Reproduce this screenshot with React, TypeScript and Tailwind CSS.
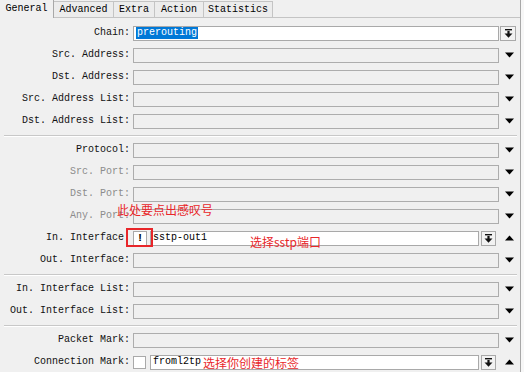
import React from "react";

type RowProps = {
  label: string;
  dim?: boolean;
  white?: boolean;
  value?: React.ReactNode;
  right?: "down" | "button" | "buttonUp";
  prefix?: "bang" | "check";
};

const MONO = "font-['Liberation_Mono','DejaVu_Sans_Mono',monospace]";

function DropBtn({ w }: { w: string }) {
  return (
    <div className={`${w} h-[15px] border border-[#a9a9a9] bg-[#f2f2f2] flex items-center justify-center`}>
      <svg width="9" height="9" viewBox="0 0 9 9">
        <rect x="1" y="0" width="7" height="1.4" fill="#111" />
        <rect x="3.4" y="2" width="2.2" height="3" fill="#111" />
        <path d="M0.5 4.6 H8.5 L4.5 8.8 Z" fill="#111" />
      </svg>
    </div>
  );
}

function Tri({ up }: { up?: boolean }) {
  return (
    <svg width="9" height="6" viewBox="0 0 9 6">
      <path d={up ? "M0 5.5 H9 L4.5 0.5 Z" : "M0 0.5 H9 L4.5 5.5 Z"} fill="#000" />
    </svg>
  );
}

function Row({ label, dim, white, value, right = "down", prefix }: RowProps) {
  return (
    <div className="flex items-center h-[22px]">
      <div className={`w-[131px] text-right pr-[1px] whitespace-pre ${dim ? "text-[#8c8c8c]" : "text-[#111]"}`}>
        {label}
      </div>
      <div className="flex items-center flex-1 ml-[2px]">
        {prefix === "bang" && (
          <div className="w-[14px] h-[15px] mr-[3px] border border-[#a9a9a9] bg-white flex items-center justify-center font-bold text-[11px] leading-none">
            !
          </div>
        )}
        {prefix === "check" && (
          <div className="w-[13px] h-[13px] mr-[4px] border border-[#a9a9a9] bg-white" />
        )}
        <div
          className={`flex-1 h-[15px] border flex items-center pl-[2px] ${
            white ? "bg-white border-[#a9a9a9]" : "bg-[#f0f0f0] border-[#adadad]"
          }`}
        >
          {value}
        </div>
        {right === "buttonUp" && (
          <div className="ml-[2px] mr-[3px]">
            <DropBtn w="w-[15px]" />
          </div>
        )}
      </div>
      <div className="w-[21px] flex items-center justify-center">
        {right === "button" ? (
          <div className="ml-[1px] mr-[4px]">
            <DropBtn w="w-[16px]" />
          </div>
        ) : (
          <Tri up={right === "buttonUp"} />
        )}
      </div>
    </div>
  );
}

function Sep() {
  return (
    <div className="h-[7px] flex items-center pl-[4px] pr-[3px]">
      <div className="w-full border-t border-[#c8c8c8] border-b border-b-white" />
    </div>
  );
}

const TABS = [
  { name: "General", w: "w-[54px]" },
  { name: "Advanced", w: "w-[60px]" },
  { name: "Extra", w: "w-[41px]" },
  { name: "Action", w: "w-[49px]" },
  { name: "Statistics", w: "w-[69px]" },
];

export default function App() {
  return (
    <div className={`relative w-[524px] h-[372px] overflow-hidden bg-[#f7f7f7] text-[10px] leading-none ${MONO}`}>
      <div className="w-[521px] h-full bg-[#f0f0f0] border-r border-[#a8a8a8]">
        {/* tabs */}
        <div className="flex items-end h-[18px] border-b border-[#c4c4c4]">
          {TABS.map((t, i) =>
            i === 0 ? (
              <div
                key={t.name}
                className={`${t.w} h-[19px] -mb-px bg-[#f0f0f0] border-r border-[#a8a8a8] flex items-center justify-center text-black`}
              >
                {t.name}
              </div>
            ) : (
              <div
                key={t.name}
                className={`${t.w} h-[16px] bg-[#ececec] border-t border-r border-[#c4c4c4] flex items-center justify-center text-black pt-[1px]`}
              >
                {t.name}
              </div>
            )
          )}
        </div>

        <div className="pt-[4px]">
          <Row
            label="Chain:"
            white
            right="button"
            value={<span className="bg-[#0078d7] text-white px-[1px] py-[1px]">prerouting</span>}
          />
          <Row label="Src. Address:" />
          <Row label="Dst. Address:" />
          <Row label="Src. Address List:" />
          <Row label="Dst. Address List:" />
          <Sep />
          <Row label="Protocol:" />
          <Row label="Src. Port:" dim />
          <Row label="Dst. Port:" dim />
          <Row label="Any. Port:" dim />
          <Row
            label="In. Interface:"
            white
            prefix="bang"
            right="buttonUp"
            value={<span className="text-black">sstp-out1</span>}
          />
          <Row label="Out. Interface:" />
          <Sep />
          <Row label="In. Interface List:" />
          <Row label="Out. Interface List:" />
          <Sep />
          <Row label="Packet Mark:" />
          <Row
            label="Connection Mark:"
            white
            prefix="check"
            right="buttonUp"
            value={<span className="text-black">froml2tp</span>}
          />
        </div>
      </div>

      {/* annotations */}
      <div className="absolute left-[126px] top-[228px] w-[27px] h-[19px] border-2 border-[#e8262a]" />
      <div className="absolute left-[117px] top-[202px] text-[12px] leading-[15px] text-[#e8262a] font-['Noto_Sans_CJK_SC',sans-serif]">
        此处要点出感叹号
      </div>
      <div className="absolute left-[250px] top-[234px] text-[12px] leading-[15px] text-[#e8262a] font-['Noto_Sans_CJK_SC',sans-serif]">
        选择sstp端口
      </div>
      <div className="absolute left-[203px] top-[355px] text-[12px] leading-[15px] text-[#e8262a] font-['Noto_Sans_CJK_SC',sans-serif]">
        选择你创建的标签
      </div>
    </div>
  );
}
